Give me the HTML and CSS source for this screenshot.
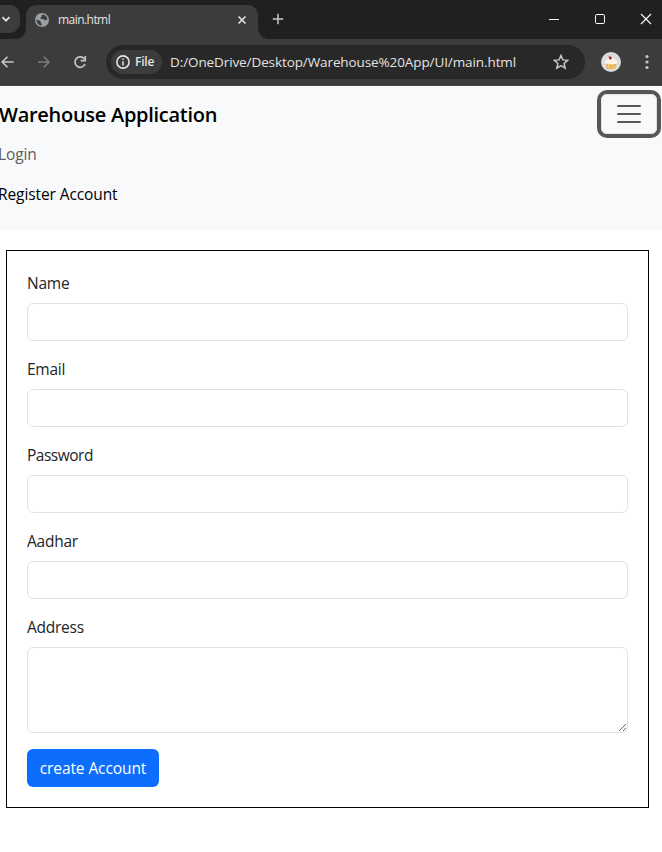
FILE: index.html
```html
<!DOCTYPE html>
<html lang="en">
<head>
<meta charset="utf-8">
<title>main.html</title>
<link rel="stylesheet" href="styles.css">
</head>
<body>
<header class="browser">
  <div class="tabstrip">
    <div class="tab-search"><svg width="20" height="28" viewBox="0 0 20 28"><path d="M2.500 12.200 6 15.700l3.500-3.500" fill="none" stroke="#e3e3e3" stroke-width="1.800"/></svg></div>
    <div class="tab">
      <svg class="globe" width="14" height="14" viewBox="0 0 14 14"><circle cx="7" cy="7" r="7" fill="#9aa0a6"/><path d="M1.500 6.200c1.300 1.600 2.700.8 3.800 1.800.9.800-.2 1.500.9 2.200.6.400.5 1.200.5 2.300C3.600 12.400 1.200 9.500 1.500 6.200zM7.400 1.600c2.700.2 4.700 2.100 5.100 4.600-1 .1-1.500 1.300-2.500 1-1-.2-1-1.200-2.200-1.300-1.100-.1-2.400.1-2.400-1 0-1 1-.8 1.300-1.500.2-.6-.2-1.200.7-1.800z" fill="#3c3c3c"/></svg>
      <span class="tab-title">main.html</span>
      <svg width="10" height="10" viewBox="0 0 10 10"><path d="m1.500 1.500 7 7m0-7-7 7" stroke="#e3e3e3" stroke-width="1.600"/></svg>
    </div>
    <svg class="new-tab" width="12" height="12" viewBox="0 0 12 12"><path d="M6 .8v10.400M.8 6h10.400" stroke="#c7c7c7" stroke-width="1.500"/></svg>
    <div class="window-buttons">
      <svg width="12" height="12" viewBox="0 0 12 12"><path d="M1 6.500h10" stroke="#fff"/></svg>
      <svg width="12" height="12" viewBox="0 0 12 12"><rect x="1.500" y="1.500" width="9" height="9" rx="1.300" fill="none" stroke="#fff"/></svg>
      <svg width="12" height="12" viewBox="0 0 12 12"><path d="m1 1 10 10M11 1 1 11" stroke="#fff" stroke-width="1.100"/></svg>
    </div>
  </div>
  <div class="toolbar">
    <svg class="back" width="14" height="14" viewBox="0 0 14 14"><path d="M13.700 7H2.500M7.500 1.700 2.200 7l5.300 5.300" fill="none" stroke="#c7c7c7" stroke-width="1.600"/></svg>
    <svg class="forward" width="14" height="14" viewBox="0 0 14 14"><path d="M1 7h11M6.700 1.700 12 7l-5.300 5.300" fill="none" stroke="#7c7c7c" stroke-width="1.600"/></svg>
    <svg class="reload" width="14" height="14" viewBox="0 0 14 14"><path d="M12 9a5.200 5.200 0 1 1-.8-5.200" fill="none" stroke="#c7c7c7" stroke-width="1.700"/><path d="M12.200 1v4.700H7.600" fill="none" stroke="#c7c7c7" stroke-width="1.700"/></svg>
    <div class="omnibox">
      <div class="chip">
        <svg width="14" height="14" viewBox="0 0 14 14"><circle cx="7" cy="7" r="6.100" fill="none" stroke="#e3e3e3" stroke-width="1.600"/><path d="M7 6.200v4.200M7 3.500v1.500" stroke="#e3e3e3" stroke-width="1.500"/></svg>
        <span>File</span>
      </div>
      <span class="url">D:/OneDrive/Desktop/Warehouse%20App/UI/main.html</span>
      <svg class="star" width="16" height="16" viewBox="0 0 16 16"><path d="m8 1.500 1.900 4.400 4.800.4-3.600 3.200 1.100 4.700L8 11.700l-4.200 2.500 1.100-4.700-3.600-3.200 4.800-.4z" fill="none" stroke="#c7c7c7" stroke-width="1.500"/></svg>
    </div>
    <svg class="avatar" width="20" height="20" viewBox="0 0 20 20"><circle cx="10" cy="10" r="10" fill="#dcdcdc"/><path d="m4.500 11 1.700 6h7.600l1.700-6z" fill="#e7b653"/><path d="M7.500 12l.7 5m3.500 0 .7-5" stroke="#f5d58a" stroke-width="1"/><path d="M4 11.500c-1-1.700.2-2.900 1.400-3C6 6.200 8 5.500 10 5.500s4 .7 4.600 3c1.300.2 2.400 1.400 1.400 3-1.500 1-2.500.2-3.500.6-1.500.6-3.200.5-4.500 0-1.400-.6-2.500.2-4-.6z" fill="#fff4e4"/><circle cx="9.300" cy="6" r="1.500" fill="#b71c24"/><path d="M9.300 5 6.500 3.700" stroke="#80613d" stroke-width=".6"/></svg>
    <svg class="menu" width="4" height="16" viewBox="0 0 4 16"><g fill="#c7c7c7"><circle cx="2" cy="2.500" r="1.600"/><circle cx="2" cy="8" r="1.600"/><circle cx="2" cy="13.500" r="1.600"/></g></svg>
  </div>
</header>
<nav class="navbar">
  <div class="navbar-head">
    <a class="brand">Warehouse Application</a>
    <button class="toggler" type="button" aria-label="Toggle navigation"><svg width="30" height="30" viewBox="0 0 30 30"><path stroke="#565758" stroke-linecap="round" stroke-miterlimit="10" stroke-width="2" d="M4 7h22M4 15h22M4 23h22"/></svg></button>
  </div>
  <a class="nav-link login">Login</a>
  <a class="nav-link register">Register Account</a>
</nav>
<form class="account-form">
  <div class="field"><label class="l-name" for="name">Name</label><input id="name" type="text"></div>
  <div class="field"><label class="l-email" for="email">Email</label><input id="email" type="email"></div>
  <div class="field"><label class="l-password" for="password">Password</label><input id="password" type="password"></div>
  <div class="field"><label class="l-aadhar" for="aadhar">Aadhar</label><input id="aadhar" type="text"></div>
  <div class="field"><label class="l-address" for="address">Address</label><textarea id="address" rows="3"></textarea></div>
  <button class="submit" type="button"><span>create Account</span></button>
</form>
</body>
</html>
```

FILE: styles.css
```css
* { box-sizing: border-box; }
body {
  margin: 0;
  height: 852px;
  overflow: hidden;
  background: #fff;
  color: #212529;
  font: 15.5px/24px "Open Sans", "Noto Sans", sans-serif;
}
svg { display: block; flex: none; }
.browser { height: 86px; background: #3c3c3c; border-bottom: 1px solid #454545; }
.tabstrip { display: flex; height: 39px; background: #1f2120; }
.tab-search { width: 20px; height: 28px; margin-top: 5px; border-radius: 0 10px 10px 0; background: #3c3c3c; }
.tab {
  position: relative;
  display: flex;
  align-items: center;
  width: 232px;
  height: 34px;
  margin: 5px 0 0 6px;
  padding: 0 11px 5px 9px;
  border-radius: 10px 10px 0 0;
  background: #3c3c3c;
}
.tab::before, .tab::after {
  content: "";
  position: absolute;
  bottom: 0;
  width: 10px;
  height: 10px;
}
.tab::before { left: -10px; background: radial-gradient(circle at 0 0, #1f2120 9.500px, #3c3c3c 10px); }
.tab::after { right: -10px; background: radial-gradient(circle at 100% 0, #1f2120 9.500px, #3c3c3c 10px); }
.tab-title { flex: 1; margin-left: 9px; color: #e3e3e3; font-size: 12px; letter-spacing: -.55px; }
.new-tab { margin: 13px 0 0 14px; }
.window-buttons { display: flex; gap: 34px; margin: 13px 10px 0 auto; }
.toolbar { display: flex; align-items: center; height: 46px; }
.forward { margin-left: 23px; }
.reload { margin-left: 22px; }
.omnibox {
  display: flex;
  align-items: center;
  width: 479px;
  height: 34px;
  margin-left: 19px;
  padding: 0 16px 0 5px;
  border-radius: 17px;
  background: #282828;
}
.chip {
  display: flex;
  align-items: center;
  gap: 5px;
  width: 51px;
  height: 24px;
  padding-left: 5px;
  border-radius: 12px;
  background: #3c3c3c;
  color: #e3e3e3;
  font-size: 12px;
  font-weight: 600;
  letter-spacing: -.2px;
}
.url { flex: 1; margin-left: 8px; color: #e3e3e3; font-size: 13.500px; letter-spacing: -.1px; white-space: nowrap; }
.avatar { margin-left: 16px; }
.menu { margin-left: 24px; }
.navbar { height: 144px; padding: 8px 5px 16px 0; background: #f8f9fa; }
.navbar-head { display: flex; align-items: center; justify-content: space-between; height: 40px; }
.brand { margin: 2px 0 0 -1px; color: #000; font-size: 20px; font-weight: 600; letter-spacing: -.28px; }
.toggler {
  width: 56px;
  height: 40px;
  padding: 4px 12px;
  border: 1px solid #dee2e6;
  border-radius: 6px;
  outline: 0;
  background: transparent;
  box-shadow: 0 0 0 4px #565656;
}
.nav-link { display: block; height: 40px; margin-left: -2px; padding: 8px 0; color: #000; letter-spacing: -.1px; }
.login { color: #5d5e5f; }
.account-form { width: 643px; height: 558px; margin: 20px 0 0 6px; padding: 20px; border: 1px solid #000; }
.field { margin-bottom: 16px; }
label { display: table; height: 24px; margin-bottom: 8px; letter-spacing: -.25px; }
.l-password { letter-spacing: -.5px; }
input, textarea {
  display: block;
  width: 100%;
  height: 38px;
  margin: 0;
  padding: 6px 12px;
  border: 1px solid #dee2e6;
  border-radius: 6px;
  background: #fff;
  font: inherit;
}
textarea { height: 86px; resize: vertical; }
.submit {
  width: 132px;
  height: 38px;
  padding: 0;
  border: 0;
  border-radius: 6px;
  background: #0d6efd;
  color: #fff;
  font: inherit;
  letter-spacing: -.1px;
}
```
